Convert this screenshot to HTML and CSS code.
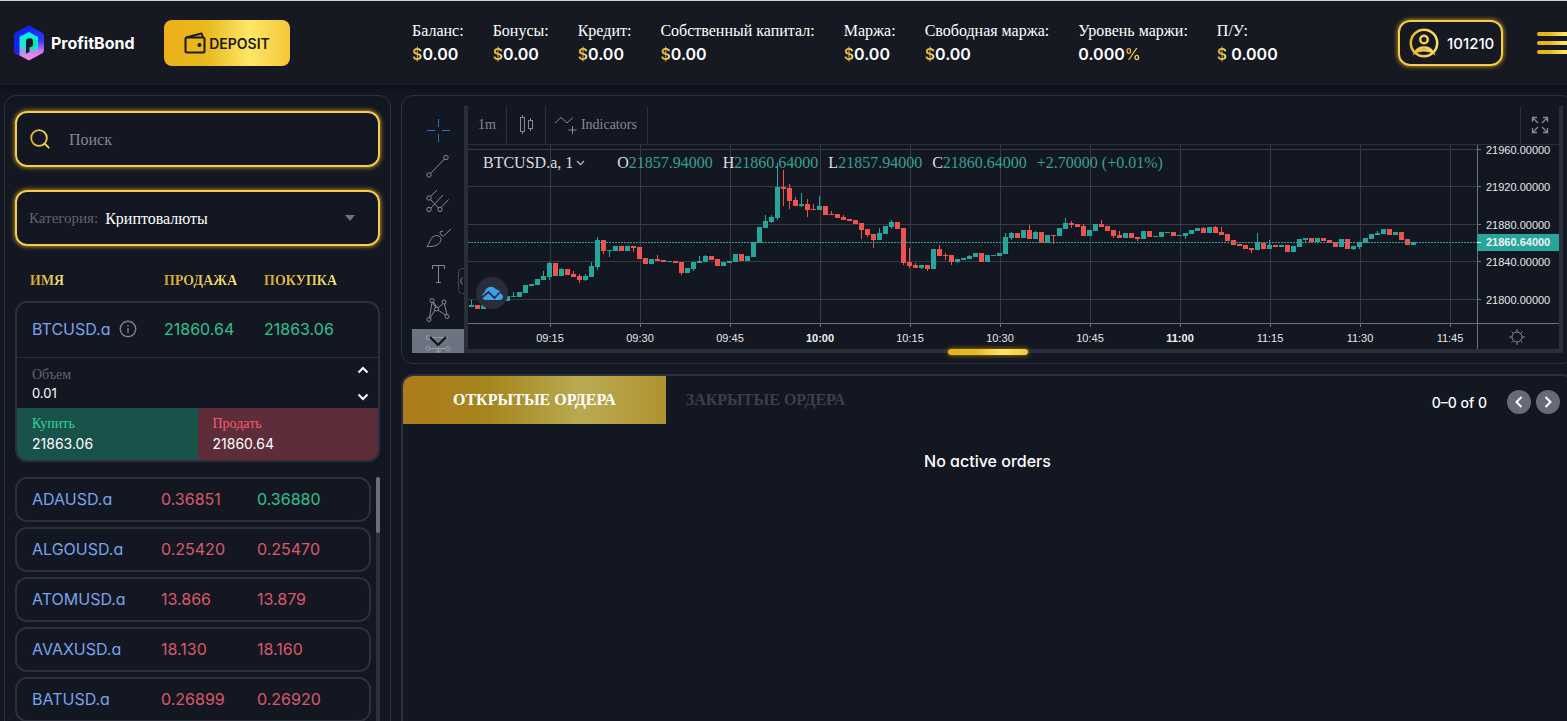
FILE: index.html
```html
<!DOCTYPE html>
<html lang="ru">
<head>
<meta charset="utf-8">
<title>ProfitBond</title>
<link rel="stylesheet" href="styles.css">
</head>
<body>
<svg class="defs" width="0" height="0" aria-hidden="true">
  <defs>
    <linearGradient id="gold" gradientUnits="userSpaceOnUse" x1="0" y1="0" x2="30" y2="0">
      <stop offset="0" stop-color="#e9b52a"/><stop offset="1" stop-color="#ffe666"/>
    </linearGradient>
    <linearGradient id="hexOuter" x1="0" y1="0" x2="0" y2="1">
      <stop offset="0" stop-color="#0a22f5"/><stop offset=".45" stop-color="#3a3df5"/><stop offset=".75" stop-color="#d77bf0"/><stop offset="1" stop-color="#ff7fe0"/>
    </linearGradient>
    <linearGradient id="hexInner" x1="0" y1="0" x2="0" y2="1">
      <stop offset="0" stop-color="#00f5e0"/><stop offset=".5" stop-color="#22e6d2"/><stop offset=".7" stop-color="#b98cf0"/><stop offset="1" stop-color="#ff84e4"/>
    </linearGradient>
  </defs>
</svg>

<header class="topbar">
  <a class="logo" href="#">
    <svg width="32" height="36" viewBox="0 0 32 36">
      <path d="M16 .5 29 7.500Q31 8.500 31 11v14q0 2.500-2 3.500L16 35.500 3 28.500Q1 27.500 1 25V11Q1 8.500 3 7.500Z" fill="url(#hexOuter)"/>
      <path d="M1 11Q1 8.500 3 7.500L16 .5 20 2.600 7 10v20.600L3 28.500Q1 27.500 1 25Z" fill="#1224e8"/>
      <path d="M16 7 25 12v13.500L16 35.200 6.500 30V12Z" fill="url(#hexInner)"/>
      <path d="M16 22v5.500l-3.500 2V15l3.500-2 8 2v7l-4 3Z" fill="#00e7b8"/>
      <path d="M16.500 13.300q3.500 0 3.500 3v3q0 2.700-3.500 3V27l-3.500 1.500V16.300q0-3 3.500-3Z" fill="#161822"/>
    </svg>
    <span>ProfitBond</span>
  </a>
  <button class="deposit" type="button">
    <svg width="22" height="22" viewBox="0 0 22 22" fill="none" stroke="#1b1a1c" stroke-width="2" stroke-linejoin="round">
      <rect x="1.500" y="5.500" width="19" height="15" rx="1.500"/><path d="M2 5.500 17.500 1.500l1.500 4"/><circle cx="15.500" cy="13" r="1" fill="#1b1a1c"/>
    </svg>DEPOSIT
  </button>
  <dl class="stats">
    <div><dt>Баланс:</dt><dd><i>$</i>0.00</dd></div>
    <div><dt>Бонусы:</dt><dd><i>$</i>0.00</dd></div>
    <div><dt>Кредит:</dt><dd><i>$</i>0.00</dd></div>
    <div><dt>Собственный капитал:</dt><dd><i>$</i>0.00</dd></div>
    <div><dt>Маржа:</dt><dd><i>$</i>0.00</dd></div>
    <div><dt>Свободная маржа:</dt><dd><i>$</i>0.00</dd></div>
    <div><dt>Уровень маржи:</dt><dd>0.000<i>%</i></dd></div>
    <div><dt>П/У:</dt><dd><i>$</i> 0.000</dd></div>
  </dl>
  <button class="account" type="button">
    <svg width="30" height="30" viewBox="0 0 30 30" fill="none" stroke="url(#gold)" stroke-width="2.500">
      <circle cx="15" cy="15" r="13.200"/><circle cx="15" cy="11.500" r="3.800"/><path d="M6.500 24c1.500-3 5-4.500 8.500-4.500s7 1.500 8.500 4.500c-4-2.500-13-2.500-17 0Z"/>
    </svg>101210
  </button>
  <button class="burger" type="button" aria-label="Меню"><b></b><b></b><b></b></button>
</header>

<main class="layout">
  <aside class="market">
    <label class="field search">
      <svg width="20" height="20" viewBox="0 0 20 20" fill="none" stroke="url(#gold)" stroke-width="1.800" stroke-linecap="round"><circle cx="9" cy="9" r="7.800"/><path d="m14.500 14.500 4.200 4.200"/></svg>
      <input type="text" placeholder="Поиск" aria-label="Поиск">
    </label>
    <div class="field category">
      <label for="cat">Категория:</label>
      <select id="cat"><option>Криптовалюты</option></select>
      <svg width="10" height="6" viewBox="0 0 10 6"><path d="M0 0h10L5 6Z" fill="#70737c"/></svg>
    </div>
    <div class="heads"><span><b>ИМЯ</b></span><span><b>ПРОДАЖА</b></span><span><b>ПОКУПКА</b></span></div>
    <section class="active">
      <div class="quote"><span class="name">BTCUSD.a
        <svg width="18" height="18" viewBox="0 0 18 18" fill="none" stroke="#7b7e87" stroke-width="1.500"><circle cx="9" cy="9" r="7.700"/><path d="M9 8v5M9 5v1.500"/></svg></span>
        <span class="up">21860.64</span><span class="up">21863.06</span></div>
      <div class="volume">
        <div><label for="vol">Объем</label><input id="vol" type="text" value="0.01"></div>
        <div class="steps">
          <button type="button" aria-label="Больше"><svg width="12" height="8" viewBox="0 0 12 8"><path d="m1.500 6.500 4.500-4.500 4.500 4.500"/></svg></button>
          <button type="button" aria-label="Меньше"><svg width="12" height="8" viewBox="0 0 12 8"><path d="m1.500 1.500 4.500 4.500 4.500-4.500"/></svg></button>
        </div>
      </div>
      <div class="trade">
        <button class="buy" type="button"><span>Купить</span>21863.06</button>
        <button class="sell" type="button"><span>Продать</span>21860.64</button>
      </div>
    </section>
    <div class="scroller">
      <ul class="rows">
        <li><span class="name">ADAUSD.a</span><span class="down">0.36851</span><span class="up">0.36880</span></li>
        <li><span class="name">ALGOUSD.a</span><span class="down">0.25420</span><span class="down">0.25470</span></li>
        <li><span class="name">ATOMUSD.a</span><span class="down">13.866</span><span class="down">13.879</span></li>
        <li><span class="name">AVAXUSD.a</span><span class="down">18.130</span><span class="down">18.160</span></li>
        <li><span class="name">BATUSD.a</span><span class="down">0.26899</span><span class="down">0.26920</span></li>
      </ul>
      <div class="track"><div class="thumb"></div></div>
    </div>
  </aside>

  <div class="work">
    <section class="chart-panel">
      <div class="terminal">
        <nav class="tools">
          <button type="button" aria-label="Crosshair"><svg viewBox="0 0 28 28" class="on"><path d="M14.500 3v8M14.500 18v8M3 14.500h8M18 14.500h8"/></svg></button>
          <button type="button" aria-label="Line"><svg viewBox="0 0 28 28"><path d="M6.500 21.500 20.500 7"/><circle cx="5" cy="23" r="2.200"/><circle cx="22" cy="5.500" r="2.200"/></svg></button>
          <button type="button" aria-label="Pitchfork"><svg viewBox="0 0 28 28"><path d="m7 8 6-6M6.500 20.500 19 7M6.500 11.500l8 8.500M17 19.500l7.500-8"/><circle cx="5" cy="10" r="2.200"/><circle cx="5" cy="21.500" r="2.200"/><circle cx="16" cy="21.500" r="2.200"/></svg></button>
          <button type="button" aria-label="Brush"><svg viewBox="0 0 28 28"><path d="M3 22.500c2.500-2.500 2.500-6.500 5-9 3-2.500 7-2.500 8.500 0 1.500 3-1 6-3.500 7.500-3 1.500-6.500 1.500-10 1.500ZM16 8c0 2.500 1.500 4 3.500 4L27 5M16 8l3-1"/></svg></button>
          <button type="button" aria-label="Text"><svg viewBox="0 0 28 28"><path d="M8.500 9V5.500h12V9M14.500 5.500V23M12 22.500h5"/></svg></button>
          <button type="button" aria-label="Patterns"><svg viewBox="0 0 28 28"><path d="M5.500 21.500 8 6.500M9.500 6l3 5M8.500 6.500 12 12M14 12l5-4.500M14 14l8 5.500M11 14l-5 8M20.500 8l2.500 11"/><circle cx="8" cy="4.500" r="2"/><circle cx="20" cy="6" r="2"/><circle cx="12.500" cy="13" r="2"/><circle cx="5" cy="23.500" r="2"/><circle cx="23" cy="20.500" r="2"/></svg></button>
          <button type="button" class="more" aria-label="More"><svg viewBox="0 0 28 24"><g stroke="#9a9da6"><circle cx="4" cy="8.500" r="2"/><circle cx="4" cy="19.500" r="2"/><circle cx="24" cy="19.500" r="2"/><path d="M6 8.500h18M6 19.500h16M14.500 16v8M12 21l2.500 3 2.500-3"/></g><path d="m6 8 8 8 8-8" stroke="#0d1016" stroke-width="2"/></svg></button>
          <span class="collapse"><svg width="4" height="8" viewBox="0 0 4 8" fill="none" stroke="#a3a6af"><path d="M3.500.5Q0 4 3.500 7.500"/></svg></span>
        </nav>
        <div class="screen">
          <div class="chartbar">
            <button type="button">1m</button>
            <button type="button" aria-label="Candles"><svg width="16" height="22" viewBox="0 0 16 22" fill="none" stroke="#868993"><path d="M4.500 1v3M4.500 17v3M12.500 4v3M12.500 14v3"/><rect x="2.500" y="3.500" width="4" height="14"/><rect x="10.500" y="6.500" width="4" height="8"/></svg></button>
            <button type="button"><svg width="24" height="20" viewBox="0 0 24 20" fill="none" stroke="#868993"><path d="m1 8 6-5.500 6 5.500 6-5.500M18.500 11v8M14.500 15h8"/></svg>Indicators</button>
            <button class="full" type="button" aria-label="Fullscreen"><svg width="18" height="18" viewBox="0 0 18 18" fill="none" stroke="#868993" stroke-width="1.300"><path d="M1.500 6V1.500H6M1.500 1.500 7 7M12 1.500h4.500V6M16.500 1.500 11 7M1.500 12v4.500H6M1.500 16.500 7 11M12 16.500h4.500V12M16.500 16.500 11 11"/></svg></button>
          </div>
          <div class="canvas">
            <div class="plot">
              <svg id="plot" class="plot-svg" height="204"></svg>
              <div class="legend">
                <button type="button">BTCUSD.a, 1 <svg width="9" height="6" viewBox="0 0 9 6" fill="none" stroke="#b2b5be" stroke-width="1.300"><path d="m1 1 3.500 3.500L8 1"/></svg></button>
                <span>O<i>21857.94000</i></span><span>H<i>21860.64000</i></span><span>L<i>21857.94000</i></span><span>C<i>21860.64000</i></span><span><i>+2.70000 (+0.01%)</i></span>
              </div>
              <div class="mark"><svg width="22" height="14" viewBox="0 0 22 14"><path d="M4 14a4 4 0 0 1-.5-7.500C4 3 7 .5 10.500.7 12.500.8 14 2 15 3.500c3 0 4 2 4.200 3.800C21 8 22 9.500 22 11c0 2-1.500 3-3 3Z" fill="#3ba1ee"/><path d="m1 11.500 6.500-5.500 6 6 5-5.500" fill="none" stroke="#2a2e3b" stroke-width="1.800"/></svg></div>
            </div>
            <svg id="prices" class="prices" width="82" height="204"></svg>
          </div>
        </div>
      </div>
      <div class="grip"></div>
    </section>

    <section class="orders">
      <div class="tabs">
        <button class="tab current" type="button">ОТКРЫТЫЕ ОРДЕРА</button>
        <button class="tab" type="button">ЗАКРЫТЫЕ ОРДЕРА</button>
        <div class="pager"><span>0–0 of 0</span>
          <button type="button" aria-label="Назад"><svg width="8" height="12" viewBox="0 0 8 12"><path d="M6.500 1 1.500 6l5 5"/></svg></button>
          <button type="button" aria-label="Вперёд"><svg width="8" height="12" viewBox="0 0 8 12"><path d="m1.500 1 5 5-5 5"/></svg></button>
        </div>
      </div>
      <p class="empty">No active orders</p>
    </section>
  </div>
</main>
<script src="chart.js"></script>
</body>
</html>
```

FILE: styles.css
```css
:root {
  --bg: #131722;
  --line: #2d303c;
  --gold: linear-gradient(to right, #edaf1a, #e7b91c 33%, #ffe666 68%, #f5c638);
  --sans: Inter, "Open Sans", "Liberation Sans", sans-serif;
  --serif: "Liberation Serif", "Times New Roman", serif;
}
* { box-sizing: border-box; }
body {
  margin: 0; height: 100vh; overflow: hidden; display: flex; flex-direction: column;
  background: var(--bg); color: #fff; font-family: var(--sans); font-feature-settings: "cv11";
}
button, input, select { font: inherit; font-feature-settings: inherit; color: inherit; background: none; border: 0; padding: 0; margin: 0; }
i { font-style: normal; }
a { color: inherit; text-decoration: none; }
.defs { position: absolute; }

.topbar {
  flex: none; display: flex; align-items: center; height: 85px; margin-right: -10px; padding-left: 13px;
  background: #161822; border-top: 1px solid #ccd6e2; box-shadow: 0 2px 6px #0b0d15;
}
.logo { display: flex; align-items: center; gap: 6px; width: 151px; font-size: 16px; font-weight: 700; }
.deposit {
  display: flex; align-items: center; justify-content: center; gap: 3px; width: 126px; height: 46px;
  border-radius: 8px; background: var(--gold); color: #1b1a1c; font-size: 14px; font-weight: 600;
}
.stats { display: flex; gap: 29px; margin: 0 0 0 122px; white-space: nowrap; }
.stats dt { font: 16px/22px var(--serif); }
.stats dd { margin: 0; font-size: 16px; line-height: 24px; font-weight: 600; }
.stats i, .heads b { color: transparent; background: linear-gradient(to right, #dfa52b, #f3df6c); background-clip: text; -webkit-background-clip: text; }
.account {
  display: flex; align-items: center; gap: 8px; margin-left: auto; width: 105px; height: 46px; padding-left: 9px;
  border: 2px solid #f3cd4b; border-radius: 12px; box-shadow: 0 0 5px #eab41f; font-size: 15px; font-weight: 500;
}
.account svg { flex: none; }
.burger { display: grid; gap: 5px; width: 40px; margin-left: 34px; }
.burger b { height: 4px; border-radius: 2px; background: var(--gold); }

.layout { flex: 1; min-height: 0; display: flex; gap: 10px; padding: 10px 0 0 4px; margin-right: -7px; }
.market {
  flex: none; width: 387px; margin-bottom: -20px; padding: 15px 10px 0;
  border: 1px solid var(--line); border-radius: 12px; overflow: hidden; display: flex; flex-direction: column;
}
.field {
  flex: none; display: flex; align-items: center; height: 56px; margin-bottom: 23px; padding: 0 23px 0 12px;
  border: 2px solid #f3cd4b; border-radius: 12px; box-shadow: 0 0 5px #eab41f; font-family: var(--serif); font-size: 15px;
}
.search { padding-left: 13px; gap: 19px; font-size: 16px; }
.search input { flex: 1; outline: 0; padding-top: 2px; }
.search input::placeholder { color: #83868e; opacity: 1; }
.category label { color: #60636c; margin-right: 7px; }
.category select { flex: 1; appearance: none; -webkit-appearance: none; font-size: 16px; }
.heads, .quote { display: grid; grid-template-columns: 134px 100px 1fr; }
.heads { flex: none; padding-left: 15px; font: 700 14px/24px var(--serif); margin-bottom: 8px; }
.active { flex: none; border: 2px solid var(--line); border-radius: 12px; overflow: hidden; margin-bottom: 15px; }
.quote { grid-template-columns: 132px 100px 1fr; align-items: center; height: 55px; padding: 0 0 2px 15px; border-bottom: 1px solid var(--line); font-size: 16px; }
.name { display: flex; align-items: center; gap: 8px; color: #79a3ec; }
.up { color: #2ec48d; }
.down { color: #dc596b; }
.volume { display: flex; justify-content: space-between; height: 50px; padding: 8px 9px 0 15px; }
.volume label { display: block; color: #60636c; font: 14px/18px var(--serif); }
.volume input { display: block; width: 80px; font-size: 13px; line-height: 18px; height: 18px; }
.steps { display: flex; flex-direction: column; justify-content: space-between; padding-bottom: 7px; }
.steps button { display: flex; }
.steps svg, .pager svg { fill: none; stroke: #fff; stroke-width: 2; }
.trade { display: grid; grid-template-columns: 1fr 1fr; height: 52px; }
.trade button { text-align: left; padding-left: 15px; font-size: 14px; line-height: 20px; background: #19524a; }
.trade span { display: block; font: 14px/20px var(--serif); color: #2fd39c; }
.trade .sell { background: #5e2d3a; }
.trade .sell span { color: #f45b6e; }
.scroller { flex: 1; min-height: 0; display: flex; gap: 5px; }
.rows { flex: 1; margin: 0; padding: 0; list-style: none; display: flex; flex-direction: column; gap: 5px; }
.rows li {
  flex: none; display: grid; grid-template-columns: 129px 96px 1fr; align-items: center; height: 45px; padding: 0 0 2px 15px;
  border: 2px solid var(--line); border-radius: 12px; font-size: 16px;
}
.track { width: 4px; background: var(--line); border-radius: 2px; }
.thumb { height: 56px; border-radius: 2px; background: #6d6f78; }

.work { flex: 1; min-width: 0; display: flex; flex-direction: column; gap: 10px; }
.chart-panel { position: relative; padding: 10px; border: 1px solid var(--line); border-radius: 12px; }
.terminal { display: flex; height: 247px; }
.tools { flex: none; position: relative; width: 52px; display: flex; flex-direction: column; align-items: center; padding-top: 6px; }
.tools button { display: flex; justify-content: center; align-items: center; width: 52px; height: 36px; }
.tools svg { width: 28px; height: 28px; fill: none; stroke: #868993; stroke-width: 1; }
.tools svg.on { stroke: #2673c8; }
.tools .more { margin-top: auto; height: 24px; background: #6c7482; }
.tools .more svg { height: 24px; }
.collapse { position: absolute; right: 0; top: 162px; width: 6px; height: 26px; display: flex; align-items: center; border: 1px solid #434651; border-right: 0; border-radius: 5px 0 0 5px; }
.tools .collapse svg { width: 4px; height: 8px; }
.screen { flex: 1; min-width: 0; display: flex; flex-direction: column; border: 4px solid #2a2e39; border-top: 0; }
.chartbar { display: flex; height: 39px; border-bottom: 1px solid var(--line); }
.chartbar button { display: flex; align-items: center; gap: 3px; padding: 0 10px; border-right: 1px solid var(--line); font: 14px/20px var(--serif); color: #868993; }
.chartbar button:nth-child(3) { padding-left: 8px; }
.chartbar button:nth-child(2) { padding: 0 11px; }
.chartbar .full { margin-left: auto; border-left: 1px solid var(--line); border-right: 0; }
.canvas { flex: 1; display: flex; }
.plot { flex: 1; min-width: 0; position: relative; }
.plot-svg { display: block; width: 100%; }
.prices { flex: none; }
.canvas text { font: 11px "Liberation Sans", Arial, sans-serif; fill: #e6e7ea; }
.canvas text.strong { font-weight: 700; fill: #f0f1f3; }
.legend { position: absolute; left: 15px; top: 8px; display: flex; gap: 10px; font: 16px/20px var(--serif); color: #dcdde1; white-space: nowrap; }
.legend i { color: #35a194; }
.legend button { margin-right: 22px; display: flex; align-items: center; gap: 3px; }
.mark { position: absolute; left: 8px; top: 132px; width: 32px; height: 32px; border-radius: 50%; background: #2a2e3b; display: flex; align-items: center; justify-content: center; }
.grip { position: absolute; left: 0; right: 0; bottom: 8px; margin: 0 auto; width: 80px; height: 6px; border-radius: 3px; background: var(--gold); box-shadow: 0 0 5px #b98a12; }

.orders { flex: 1; min-height: 0; margin-bottom: -20px; border: 2px solid var(--line); border-radius: 12px; overflow: hidden; }
.tabs { display: flex; height: 48px; }
.tab { padding: 0 20px; font: 700 16px/20px var(--serif); color: #3c3e50; }
.tab.current { padding: 0 50px; color: #fff; background: linear-gradient(to right, #ae7c1b, #a5861d 33%, #b9ab51 68%, #b0922e); }
.pager { margin-left: auto; display: flex; align-items: center; gap: 5px; padding: 4px 12px 0 0; font-size: 14px; font-weight: 500; }
.pager span { margin-right: 15px; }
.pager button { width: 24px; height: 24px; border-radius: 50%; background: #686a75; display: flex; align-items: center; justify-content: center; }
.empty { margin: 27px 0 0; text-align: center; font-size: 16px; line-height: 20px; font-weight: 500; }
```

FILE: chart.js
```js
// One candle per minute from 09:02: direction, body top, body bottom, wick high, wick low.
// Levels count down from the top of the price scale, three steps to a pixel.
const data = `g495,500,480 r495,507 g492,507 g489,495 g486,490 g483,487 g468,483 g468,471,456 g456,471 g435,459 g432,438 g417,435
g408,420,393 g369,411,366,420 r369,408 g387,408,384 r387,405 r402,411,393 r408,420,402,429 g408,420,402,423 g378,411,366 g300,381,291,390
r300,333,300,342 g330,333,330,350 g318,333 r318,333 g318,333 r318,324,318,336 r321,357 r354,372 g357,372 r357,363,345 r360,366 g363,366
r363,368 r366,399,366,405 g384,399 g366,387,366,393 g363,369,348 g348,366,345 r348,360 r357,378 g366,378 g363,369 g342,366 r342,363 g348,363
g306,351 g261,309 g243,264,225 g231,246,225,249 g141,234,69,240 r141,147,90,198 r144,183,132,207 r180,198,171 g192,198,159,201 r192,210,177,231
r207,210,192 g198,210,168 r198,225 r222,225,213 r222,234 r231,240,225 r237,243 r240,252 r249,270,249,297 r267,285,267,291 r282,300,282,324
g279,300,264 g258,282 g246,261,240,267 r246,267 r264,369,264,375 r366,378,324,384 r375,384,369 g375,384,375,387 r375,387,375,393 g327,387
r327,348,315 r345,348,339,360 r345,366,345,375 g357,366,357,369 g354,360 g348,357,345 g339,351 r339,366 g345,366 g345,348 g339,348 g291,342,279
g279,294,276,300 r279,294 g270,294 r270,297,255 g276,297,273 r276,309 g285,309 r285,288,285,312 g264,288 g249,267,234 r249,255,243,264 r252,261
r258,288,252 g270,288 g252,273 r252,261,240 r258,273 r270,288,270,294 r285,294,273 g279,294 r279,294 r291,297,291,303 g273,297 r273,291 g288,291
g276,291 g276,279 r276,288 g285,288 g279,288,279,297 g270,282 g264,273 r264,279,261 g261,279 r261,279,257 r276,285,261 r282,303 r300,315 r312,318
r315,327 r324,330,324,339 g306,330,279 r309,327 g315,327,300 r315,320 g315,320 r315,336 g318,336 g297,321 g294,300,294,306 r294,306 g294,306
r294,303 r300,309 r306,321 g297,321 r297,327 g318,327,318,330 g306,321,306,327 g294,309 g282,297 g279,285,273 g267,282 r267,285 g276,285 r276,300
r297,315 g306,315`;

const y = level => Math.round(level / 3) - 5;
const rect = (x, top, w, h, fill) => `<rect x="${x}" y="${top}" width="${w}" height="${h}" fill="${fill}"/>`;
const grid = '#363a45', axis = '#6f727b';
const levels = [[4, 21960], [41, 21920], [79, 21880], [116, 21840], [154, 21800]];
const times = ['09:15', '09:30', '09:45', '10:00', '10:15', '10:30', '10:45', '11:00', '11:15', '11:30', '11:45'];

let plot = levels.map(([top]) => rect(0, top, '100%', 1, grid)).join('');
times.forEach((t, n) => {
  const x = 82 + 90 * n;
  plot += rect(x, 0, 1, 178, grid) + rect(x, 178, 1, 4, axis) +
    `<text x="${x}" y="197" text-anchor="middle"${t.endsWith(':00') ? ' class="strong"' : ''}>${t}</text>`;
});
plot += rect(0, 178, '100%', 1, axis);
data.split(/\s+/).forEach((item, n) => {
  const color = item[0] === 'g' ? '#26a69a' : '#ef5350';
  const [top, bottom, high = top, low = bottom] = item.slice(1).split(',').map(Number);
  const x = 1 + 6 * n;
  plot += rect(x + 2, y(high), 1, Math.max(1, y(low) - y(high)), color) +
    rect(x, y(top), 5, Math.max(1, y(bottom) - y(top)), color);
});
plot += '<path d="M0 97.500H2000" stroke="#26a69a" stroke-dasharray="2 1"/>';
document.getElementById('plot').innerHTML = plot;

let prices = rect(0, 0, 1, 204, axis) + rect(0, 178, 82, 1, axis);
levels.forEach(([top, price]) => {
  prices += rect(0, top, 4, 1, axis) + `<text x="9" y="${top + 5}">${price}.00000</text>`;
});
prices += rect(0, 89, 82, 17, '#26a69a') + rect(0, 97, 4, 1, '#fff') + '<text class="strong" x="9" y="101">21860.64000</text>';
prices += '<g fill="none" stroke="#868993"><circle cx="40" cy="192" r="5"/>' +
  '<path d="M40 187v-3M40 197v3M35 192h-3M45 192h3M36.500 188.500l-2-2M43.500 188.500l2-2M36.500 195.500l-2 2M43.500 195.500l2 2"/></g>';
document.getElementById('prices').innerHTML = prices;
```
